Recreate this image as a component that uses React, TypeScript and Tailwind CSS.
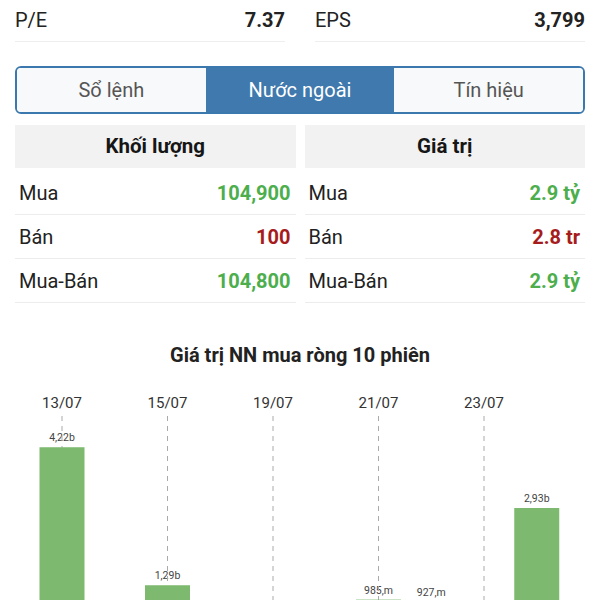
import React from "react";

const rowsLeft = [
  { label: "Mua", value: "104,900", color: "text-[#4cae4c]" },
  { label: "Bán", value: "100", color: "text-[#a61c1c]" },
  { label: "Mua-Bán", value: "104,800", color: "text-[#4cae4c]" },
];
const rowsRight = [
  { label: "Mua", value: "2.9 tỷ", color: "text-[#4cae4c]" },
  { label: "Bán", value: "2.8 tr", color: "text-[#a61c1c]" },
  { label: "Mua-Bán", value: "2.9 tỷ", color: "text-[#4cae4c]" },
];

function Table({ title, rows }: { title: string; rows: typeof rowsLeft }) {
  return (
    <div className="flex flex-col">
      <div className="h-[43px] bg-[#f2f2f2] flex items-center justify-center text-[20.5px] font-bold text-[#161616]">
        {title}
      </div>
      <div className="mt-[3px]">
        {rows.map((r) => (
          <div
            key={r.label}
            className="h-[44px] flex items-center justify-between border-b border-[#ececec] pl-[4px] pr-[5px] text-[20px]"
          >
            <span className="text-[#222]">{r.label}</span>
            <span className={`font-bold ${r.color}`}>{r.value}</span>
          </div>
        ))}
      </div>
    </div>
  );
}

const data: ({ v: number; label: string } | null)[] = [
  { v: 4.22, label: "4,22b" },
  null,
  { v: 1.29, label: "1,29b" },
  null,
  null,
  null,
  { v: 0.985, label: "985,m" },
  { v: 0.927, label: "927,m" },
  null,
  { v: 2.93, label: "2,93b" },
];
const dates: Record<number, string> = { 0: "13/07", 2: "15/07", 4: "19/07", 6: "21/07", 8: "23/07" };

function Chart() {
  const base = 268;
  const scale = 47.1;
  const cx = (i: number) => 62 + i * 52.75;
  return (
    <svg width="600" height="300" viewBox="0 0 600 300" className="block">
      {data.map((d, i) =>
        d ? (
          <text
            key={"l" + i}
            x={cx(i)}
            y={base - d.v * scale - 6}
            textAnchor="middle"
            fontSize="10.5"
            fill="#444"
            fontFamily="Roboto, sans-serif"
          >
            {d.label}
          </text>
        ) : null
      )}
      {Object.keys(dates).map((k) => {
        const i = Number(k);
        return (
          <g key={k}>
            <text
              x={cx(i)}
              y={30}
              textAnchor="middle"
              fontSize="15"
              fill="#333"
              fontFamily="Roboto, sans-serif"
            >
              {dates[i]}
            </text>
            <line x1={cx(i)} x2={cx(i)} y1={38} y2={300} stroke="#aaa" strokeWidth="1" strokeDasharray="5 5" />
          </g>
        );
      })}
      {data.map((d, i) => {
        if (!d) return null;
        const h = d.v * scale;
        return <rect key={"b" + i} x={cx(i) - 22.5} y={base - h} width={45} height={h} fill="#7dba6f" />;
      })}
    </svg>
  );
}

export default function App() {
  return (
    <div className="w-[600px] h-[600px] overflow-hidden bg-white font-['Roboto',sans-serif]">
      <div className="grid grid-cols-2 gap-[30px] px-[15px]">
        <div className="h-[42px] flex items-center justify-between border-b border-[#eeeeee] text-[20px] pb-[2px]">
          <span className="text-[#222]">P/E</span>
          <span className="font-bold text-[#222]">7.37</span>
        </div>
        <div className="h-[42px] flex items-center justify-between border-b border-[#eeeeee] text-[20px] pb-[2px]">
          <span className="text-[#222]">EPS</span>
          <span className="font-bold text-[#222]">3,799</span>
        </div>
      </div>

      <div className="mx-[15px] mt-[24px] h-[48px] rounded-[6px] border-2 border-[#3b78ad] overflow-hidden grid grid-cols-3 text-[20px]">
        <div className="bg-[#f8f9fa] flex items-center justify-center text-[#555]">Sổ lệnh</div>
        <div className="bg-[#4079ad] flex items-center justify-center text-white">Nước ngoài</div>
        <div className="bg-[#f8f9fa] flex items-center justify-center text-[#555]">Tín hiệu</div>
      </div>

      <div className="mx-[15px] mt-[11px] grid grid-cols-2 gap-[9px]">
        <Table title="Khối lượng" rows={rowsLeft} />
        <Table title="Giá trị" rows={rowsRight} />
      </div>

      <div className="mt-[37px] text-center text-[20px] font-bold text-[#222]">Giá trị NN mua ròng 10 phiên</div>
      <div className="mt-[8px]">
        <Chart />
      </div>
    </div>
  );
}
